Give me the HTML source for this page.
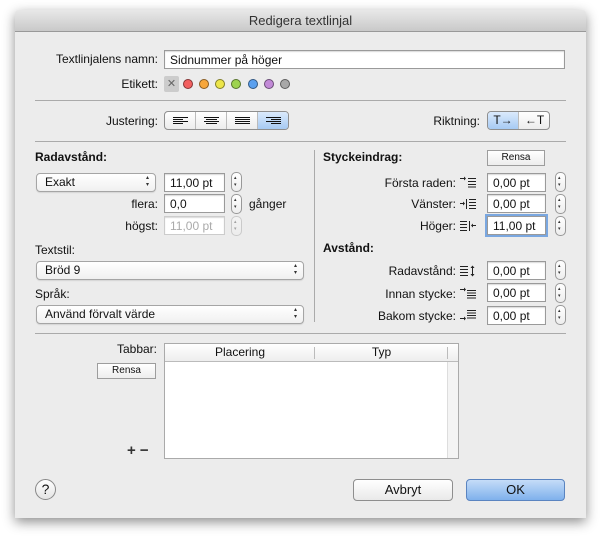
<!DOCTYPE html><html><head><meta charset="utf-8"><style>
*{box-sizing:border-box}body{margin:0;width:602px;height:540px;background:#fff;font-family:"Liberation Sans",sans-serif;font-size:12px;color:#111;position:relative;overflow:hidden}
.a{position:absolute}
#win{left:15px;top:10px;width:571px;height:508px;background:#ececec;box-shadow:0 4px 12px rgba(0,0,0,.45);border-radius:4px 4px 0 0}
#tb{left:15px;top:10px;width:571px;height:22px;background:linear-gradient(#e8e8e8,#c9c9c9);border-bottom:1px solid #999;border-radius:4px 4px 0 0;text-align:center;font-size:13px;line-height:22px;color:#333}
.r{text-align:right}
.in{background:#fff;border:1px solid #9a9a9a;box-shadow:inset 0 1px 1px rgba(0,0,0,.15);padding:1px 5px;font-size:12px;line-height:16px;height:19px}
.pop{background:linear-gradient(#fff,#f0f0f0);border:1px solid #a5a5a5;border-radius:4px;padding:0 8px;line-height:17px;height:19px;box-shadow:0 1px 1px rgba(0,0,0,.1)}
.pop:after{content:"\25B4\A\25BE";white-space:pre;position:absolute;right:6px;top:1px;font-size:6px;line-height:7px;color:#333}
.st{width:11px;height:20px;border:1px solid #999;border-radius:5px;background:linear-gradient(#fff,#eee)}
.st:after{content:"\25B4\A\25BE";white-space:pre;position:absolute;left:2px;top:2px;font-size:5px;line-height:7px;color:#333}
.sep{height:1px;background:#aaa}
.btn{background:linear-gradient(#fff,#ededed);border:1px solid #9d9d9d;text-align:center;font-size:10px;line-height:14px;height:16px}
.b{font-weight:bold}
.dot{width:10px;height:10px;border-radius:50%;top:79px;border:1px solid rgba(0,0,0,.45)}
.seg{height:19px;border:1px solid #8f8f8f;border-radius:4px;background:linear-gradient(#fff,#ececec);overflow:hidden}
.sg{position:absolute;top:0;height:17px;border-right:1px solid #bbb}
.sel{background:linear-gradient(#dbeafc,#a6caf3)}
.big{height:22px;border:1px solid #8e8e8e;border-radius:4px;background:linear-gradient(#fff,#e9e9e9);text-align:center;font-size:13px;line-height:20px}
.ic{position:absolute;left:459px}
</style></head><body>
<div class="a" id="win"></div>
<div class="a" id="tb">Redigera textlinjal</div>

<div class="a r" style="left:30px;width:128px;top:52px">Textlinjalens namn:</div>
<div class="a in" style="left:164px;top:50px;width:401px">Sidnummer på höger</div>
<div class="a r" style="left:30px;width:128px;top:77px">Etikett:</div>
<div class="a" style="left:164px;top:76px;width:15px;height:16px;background:#ccc;border-radius:2px;text-align:center;color:#666;font-size:11px;line-height:16px">✕</div>
<div class="a dot" style="left:183px;background:#f26060"></div>
<div class="a dot" style="left:199px;background:#f7a73c"></div>
<div class="a dot" style="left:215px;background:#ece54a"></div>
<div class="a dot" style="left:231px;background:#9ed34f"></div>
<div class="a dot" style="left:248px;background:#5aa0ef"></div>
<div class="a dot" style="left:264px;background:#c28ad7"></div>
<div class="a dot" style="left:280px;background:#a8a8a8"></div>
<div class="a sep" style="left:35px;top:100px;width:531px"></div>

<div class="a r" style="left:30px;width:128px;top:114px">Justering:</div>
<div class="a seg" style="left:164px;top:111px;width:125px">
<div class="sg" style="left:0;width:31px"><svg width="31" height="17"><g stroke="#111"><path d="M8 5.5h15M8 7.5h10M8 9.5h15M8 11.5h10"/></g></svg></div>
<div class="sg" style="left:31px;width:31px"><svg width="31" height="17"><g stroke="#111"><path d="M8 5.5h15M10 7.5h11M8 9.5h15M10 11.5h11"/></g></svg></div>
<div class="sg" style="left:62px;width:31px"><svg width="31" height="17"><g stroke="#111"><path d="M8 5.5h15M8 7.5h15M8 9.5h15M8 11.5h15"/></g></svg></div>
<div class="sg sel" style="left:93px;width:31px;border:0"><svg width="31" height="17"><g stroke="#111"><path d="M8 5.5h15M13 7.5h10M8 9.5h15M13 11.5h10"/></g></svg></div>
</div>
<div class="a r" style="left:380px;width:100px;top:114px">Riktning:</div>
<div class="a seg" style="left:487px;top:111px;width:63px">
<div class="sg sel" style="left:0;width:31px;text-align:center;font-size:12px;line-height:17px">T→</div>
<div class="sg" style="left:31px;width:31px;border:0;text-align:center;font-size:12px;line-height:17px">←T</div>
</div>
<div class="a sep" style="left:35px;top:141px;width:531px"></div>

<div class="a b" style="left:35px;top:150px">Radavstånd:</div>
<div class="a pop" style="left:36px;top:173px;width:120px">Exakt</div>
<div class="a in" style="left:164px;top:173px;width:61px">11,00 pt</div>
<div class="a st" style="left:231px;top:172px"></div>
<div class="a r" style="left:60px;width:98px;top:197px">flera:</div>
<div class="a in" style="left:164px;top:194px;width:61px">0,0</div>
<div class="a st" style="left:231px;top:194px"></div>
<div class="a" style="left:249px;top:197px">gånger</div>
<div class="a r" style="left:60px;width:98px;top:219px">högst:</div>
<div class="a in" style="left:164px;top:216px;width:61px;color:#aaa;border-color:#ccc">11,00 pt</div>
<div class="a st" style="left:231px;top:216px;opacity:.4"></div>
<div class="a" style="left:35px;top:243px">Textstil:</div>
<div class="a pop" style="left:36px;top:261px;width:268px">Bröd 9</div>
<div class="a" style="left:35px;top:287px">Språk:</div>
<div class="a pop" style="left:36px;top:305px;width:268px">Använd förvalt värde</div>
<div class="a" style="left:314px;top:150px;width:1px;height:172px;background:#aaa"></div>

<div class="a b" style="left:323px;top:150px">Styckeindrag:</div>
<div class="a btn" style="left:487px;top:150px;width:58px">Rensa</div>
<div class="a r" style="left:340px;width:116px;top:176px">Första raden:</div>
<div class="a r" style="left:340px;width:116px;top:197px">Vänster:</div>
<div class="a r" style="left:340px;width:116px;top:219px">Höger:</div>
<div class="a b" style="left:323px;top:241px">Avstånd:</div>
<div class="a r" style="left:340px;width:116px;top:264px">Radavstånd:</div>
<div class="a r" style="left:340px;width:116px;top:287px">Innan stycke:</div>
<div class="a r" style="left:340px;width:116px;top:309px">Bakom stycke:</div>

<svg class="ic" style="top:176px" width="18" height="12"><g stroke="#222" fill="#222"><path d="M1 2.5h4"/><path d="M5 0.5v4l2-2z" stroke="none"/><path d="M9 2.5h8M9 5.5h8M9 8.5h8M9 11h8" stroke-width="1"/></g></svg>
<svg class="ic" style="top:198px" width="18" height="12"><g stroke="#222" fill="#222"><path d="M1 5.5h3"/><path d="M4 3.5v4l2-2z" stroke="none"/><path d="M7.5 1v10"/><path d="M10 1.5h7M10 4.5h7M10 7.5h7M10 10.5h7"/></g></svg>
<svg class="ic" style="top:220px" width="18" height="12"><g stroke="#222" fill="#222"><path d="M1 1.5h7M1 4.5h7M1 7.5h7M1 10.5h7"/><path d="M10.5 1v10"/><path d="M14 5.5h3"/><path d="M14 3.5v4l-2-2z" stroke="none"/></g></svg>
<svg class="ic" style="top:265px" width="18" height="12"><g stroke="#222" fill="#222"><path d="M1 1.5h8M1 4.5h8M1 7.5h8M1 10.5h8"/><path d="M13.5 2v8"/><path d="M11.5 3l2-2.5 2 2.5zM11.5 9l2 2.5 2-2.5z" stroke="none"/></g></svg>
<svg class="ic" style="top:287px" width="18" height="12"><g stroke="#222" fill="#222"><path d="M1 2.5h4"/><path d="M5 0.5v4l2-2z" stroke="none"/><path d="M8 3.5h9M8 6h9M8 8.5h9M8 11h9"/></g></svg>
<svg class="ic" style="top:309px" width="18" height="12"><g stroke="#222" fill="#222"><path d="M8 1.5h9M8 4h9M8 6.5h9M8 9h9"/><path d="M1 9.5h4"/><path d="M5 7.5v4l2-2z" stroke="none"/></g></svg>

<div class="a in" style="left:487px;top:173px;width:59px">0,00 pt</div>
<div class="a st" style="left:555px;top:172px"></div>
<div class="a in" style="left:487px;top:194px;width:59px">0,00 pt</div>
<div class="a st" style="left:555px;top:194px"></div>
<div class="a in" style="left:487px;top:216px;width:59px;box-shadow:0 0 0 2px #7aa7e0">11,00 pt</div>
<div class="a st" style="left:555px;top:216px"></div>
<div class="a in" style="left:487px;top:261px;width:59px">0,00 pt</div>
<div class="a st" style="left:555px;top:260px"></div>
<div class="a in" style="left:487px;top:283px;width:59px">0,00 pt</div>
<div class="a st" style="left:555px;top:283px"></div>
<div class="a in" style="left:487px;top:306px;width:59px">0,00 pt</div>
<div class="a st" style="left:555px;top:305px"></div>
<div class="a sep" style="left:35px;top:333px;width:531px"></div>

<div class="a r" style="left:60px;width:97px;top:342px">Tabbar:</div>
<div class="a btn" style="left:97px;top:363px;width:59px">Rensa</div>
<div class="a" style="left:127px;top:442px;font-size:15px;font-weight:bold;color:#333">+ −</div>
<div class="a" style="left:164px;top:343px;width:295px;height:116px;background:#fff;border:1px solid #aaa">
<div class="a" style="left:0;top:0;width:293px;height:18px;background:linear-gradient(#fff,#eee);border-bottom:1px solid #bbb"></div>
<div class="a" style="left:0;top:1px;width:150px;text-align:center">Placering</div>
<div class="a" style="left:149px;top:3px;width:1px;height:12px;background:#bbb"></div>
<div class="a" style="left:150px;top:1px;width:133px;text-align:center">Typ</div>
<div class="a" style="left:282px;top:3px;width:1px;height:12px;background:#bbb"></div>
<div class="a" style="left:282px;top:18px;width:11px;height:96px;background:#f4f4f4;border-left:1px solid #ddd"></div>
</div>

<div class="a" style="left:35px;top:479px;width:21px;height:21px;border-radius:50%;border:1px solid #888;background:linear-gradient(#fff,#e4e4e4);text-align:center;font-size:14px;line-height:19px">?</div>
<div class="a big" style="left:353px;top:479px;width:100px">Avbryt</div>
<div class="a big" style="left:466px;top:479px;width:99px;background:linear-gradient(#c5dcf8,#7fb1ec);border-color:#5a84c0">OK</div>
</body></html>
